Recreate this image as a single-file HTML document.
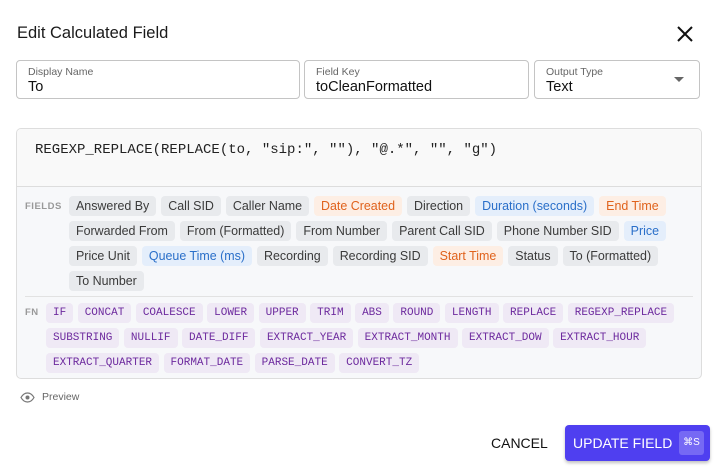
<!DOCTYPE html>
<html><head><meta charset="utf-8"><style>
*{box-sizing:border-box;margin:0;padding:0}
body{width:716px;height:468px;background:#fff;font-family:"Liberation Sans",sans-serif;color:#111;position:relative;overflow:hidden}
.title{position:absolute;left:17px;top:24px;font-size:16.5px;font-weight:500;color:#1a1a1a}
.x{position:absolute;left:675px;top:24px}
.inp{position:absolute;top:60px;height:39px;border:1px solid #c4c4c4;border-radius:4px;padding:5px 11px}
.inp .l{font-size:10.5px;color:#666}
.inp .v{font-size:14.5px;color:#111;margin-top:1px}
.box{position:absolute;left:16px;top:128px;width:686px;height:251px;border:1px solid #ddd;border-radius:5px;background:#f7f8fa;overflow:hidden}
.code{height:58px;border-bottom:1px solid #ddd;font-family:"Liberation Mono",monospace;font-size:14px;padding:13px 0 0 18px;color:#222;background:#f9f9f9}
.lab{position:absolute;font-size:9.5px;font-weight:700;color:#999;letter-spacing:.5px}
.chips{display:flex;flex-wrap:wrap;gap:5px 5px}
.c{height:20px;line-height:20px;padding:0 7px;border-radius:4px;background:#e8eaed;color:#3a3a3a;font-size:12.45px;white-space:nowrap}
.c.o{background:#fdeee4;color:#e0621c}
.c.b{background:#e4eefb;color:#2a6fc9}
.f{height:20px;line-height:20px;padding:0 7px;border-radius:4px;background:#efe9f5;color:#6d2a9e;font-family:"Liberation Mono",monospace;font-size:11px;white-space:nowrap}
.fn{gap:5px 4.5px}
.btn{position:absolute;left:565px;top:425px;width:145px;height:36px;background:#4f3ff0;border-radius:4px;color:#fff;font-size:14px;font-weight:500;padding-left:8px;line-height:36px;box-shadow:0 2px 3px rgba(0,0,0,.25)}
.kbd{position:absolute;right:6px;top:6px;width:25px;height:24px;background:#7669f4;border-radius:3px;font-size:10px;line-height:24px;text-align:center}
</style></head><body>
<div class="title">Edit Calculated Field</div>
<svg class="x" width="20" height="20" viewBox="0 0 20 20"><path d="M3 3L17 17M17 3L3 17" stroke="#111" stroke-width="2"/></svg>
<div class="inp" style="left:16px;width:284px"><div class="l">Display Name</div><div class="v">To</div></div>
<div class="inp" style="left:304px;width:225px"><div class="l">Field Key</div><div class="v">toCleanFormatted</div></div>
<div class="inp" style="left:534px;width:166px"><div class="l">Output Type</div><div class="v">Text</div>
<svg style="position:absolute;left:139px;top:16px" width="10" height="6"><path d="M0 0L10 0L5 5Z" fill="#666"/></svg></div>
<div class="box">
<div class="code">REGEXP_REPLACE(REPLACE(to, "sip:", ""), "@.*", "", "g")</div>
<div class="lab" style="left:8px;top:72px">FIELDS</div>
<div class="chips" style="position:absolute;left:52px;top:67px;width:626px">
<span class="c">Answered By</span><span class="c">Call SID</span><span class="c">Caller Name</span><span class="c o">Date Created</span><span class="c">Direction</span><span class="c b">Duration (seconds)</span><span class="c o">End Time</span>
<span class="c">Forwarded From</span><span class="c">From (Formatted)</span><span class="c">From Number</span><span class="c">Parent Call SID</span><span class="c">Phone Number SID</span><span class="c b">Price</span>
<span class="c">Price Unit</span><span class="c b">Queue Time (ms)</span><span class="c">Recording</span><span class="c">Recording SID</span><span class="c o">Start Time</span><span class="c">Status</span><span class="c">To (Formatted)</span>
<span class="c">To Number</span></div>
<div style="position:absolute;left:8px;right:8px;top:167px;border-top:1px solid #e2e2e2"></div>
<div class="lab" style="left:8px;top:178px">FN</div>
<div class="chips fn" style="position:absolute;left:29px;top:174px;width:650px">
<span class="f">IF</span><span class="f">CONCAT</span><span class="f">COALESCE</span><span class="f">LOWER</span><span class="f">UPPER</span><span class="f">TRIM</span><span class="f">ABS</span><span class="f">ROUND</span><span class="f">LENGTH</span><span class="f">REPLACE</span><span class="f">REGEXP_REPLACE</span>
<span class="f">SUBSTRING</span><span class="f">NULLIF</span><span class="f">DATE_DIFF</span><span class="f">EXTRACT_YEAR</span><span class="f">EXTRACT_MONTH</span><span class="f">EXTRACT_DOW</span><span class="f">EXTRACT_HOUR</span>
<span class="f">EXTRACT_QUARTER</span><span class="f">FORMAT_DATE</span><span class="f">PARSE_DATE</span><span class="f">CONVERT_TZ</span></div>
</div>
<svg style="position:absolute;left:20px;top:392px" width="15" height="11" viewBox="0 0 15 11"><path d="M1 5.5C3 2 5 1 7.5 1S12 2 14 5.5C12 9 10 10 7.5 10S3 9 1 5.5Z" fill="none" stroke="#777" stroke-width="1.2"/><circle cx="7.5" cy="5.5" r="2" fill="#777"/></svg>
<div style="position:absolute;left:42px;top:391px;font-size:10.5px;color:#666">Preview</div>
<div style="position:absolute;left:491px;top:435px;font-size:14px;font-weight:500;color:#111">CANCEL</div>
<div class="btn">UPDATE FIELD<span class="kbd">⌘S</span></div>
</body></html>
